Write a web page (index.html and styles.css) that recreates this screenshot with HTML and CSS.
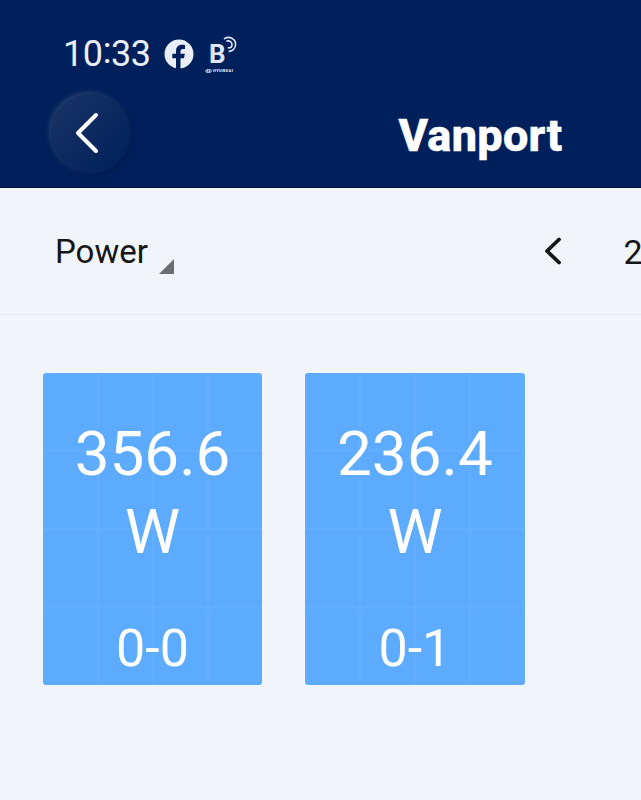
FILE: index.html
```
<!DOCTYPE html>
<html lang="en">
<head>
<meta charset="utf-8">
<title>Vanport</title>
<link rel="stylesheet" href="styles.css">
</head>
<body>
<div class="screen">
  <header class="header">
    <div class="status">
      <span class="clock">10<span class="colon">:</span>33</span>
      <svg class="facebook" viewBox="0 0 30 30">
        <circle cx="15" cy="15" r="14.5" fill="#e9eef8"/>
        <path d="M12 30V19.200H8.300v-4.400H12v-2.200c0-4.700 2-6.900 6.300-6.900 1 0 2.200.2 2.700.4v3.900h-1.800c-2.100 0-2.700.8-2.700 2.800v2h4.300l-.8 4.400h-3.500V30z" fill="#00205b"/>
      </svg>
      <div class="bluelink">
        <span class="bluelink-b">B</span>
        <svg class="waves" viewBox="0 0 14 17" fill="none" stroke="#dfe6f3" stroke-linecap="round">
          <path d="M1.500 2.600C6-.2 12.600 2.400 12.600 8.100c0 4.200-3 6.800-6.300 7.300" stroke-width="1.600"/>
          <path d="M4 5c2.600-.6 5 1 5 3.400 0 2.200-1.700 3.500-3.600 3.500" stroke-width="1.600"/>
        </svg>
        <div class="brand">
          <svg class="brand-mark" viewBox="0 0 7 4" fill="none" stroke="#dfe6f3" stroke-width=".8"><ellipse cx="3.500" cy="2" rx="3" ry="1.600"/><path d="M2.700.6 2 3.400M5 .6 4.300 3.400M2.300 2.200 4.700 1.800"/></svg>
          <span>HYUNDAI</span>
        </div>
      </div>
    </div>
    <div class="titlebar">
      <div class="back">
        <svg viewBox="0 0 24 42" fill="none" stroke="#fff" stroke-width="4" stroke-linecap="round" stroke-linejoin="round"><path d="M21 3 3 21 21 39"/></svg>
      </div>
      <h1 class="title">Vanport</h1>
    </div>
  </header>
  <div class="toolbar">
    <span class="metric">Power</span>
    <svg class="corner" viewBox="0 0 15 15"><path d="M15 0V15H0z" fill="#6a6d72"/></svg>
    <svg class="prev" viewBox="0 0 17 28" fill="none" stroke="#151617" stroke-width="3.800" stroke-linecap="round" stroke-linejoin="round"><path d="M15 2.500 3 14 15 25.500"/></svg>
    <span class="date">2</span>
  </div>
  <main class="panels">
    <div class="panel"><div class="value">356.6</div><div class="value">W</div><div class="label">0-0</div></div>
    <div class="panel"><div class="value">236.4</div><div class="value">W</div><div class="label">0-1</div></div>
  </main>
</div>
</body>
</html>
```
FILE: styles.css
```
* { box-sizing: border-box; }
body { margin: 0; font-family: Roboto, sans-serif; background: #f1f5fa; }
.screen { width: 641px; height: 800px; overflow: hidden; }
.header { height: 188px; background: #00205b; border-bottom: 1px solid #001446; color: #fff; padding-top: 32px; }
.status { display: flex; height: 44px; padding-left: 63px; }
.clock { width: 101px; font-size: 36px; line-height: 44px; letter-spacing: -.4px; color: #e9eef8; }
.colon { position: relative; top: -3px; }
.facebook { width: 30px; height: 30px; margin-top: 7px; }
.bluelink { position: relative; width: 34px; height: 44px; margin-left: 11px; color: #dfe6f3; }
.bluelink-b { display: block; padding-left: 4px; font-size: 26px; line-height: 30px; margin-top: 7px; font-weight: 700; }
.waves { position: absolute; left: 18px; top: 4px; width: 14px; height: 17px; }
.brand { display: flex; align-items: center; gap: 1px; height: 3px; font-size: 4px; line-height: 3px; font-weight: 900; letter-spacing: .5px; }
.brand-mark { width: 7px; height: 4px; }
.titlebar { display: flex; height: 111px; padding-left: 51px; }
.back { display: flex; align-items: center; justify-content: center; width: 79px; height: 79px; margin-top: 17.500px; border-radius: 50%; padding-right: 7px; background: linear-gradient(135deg, #1b3467, #0b285f 55%, #00205a); box-shadow: -2px -2px 5px #26406f, 3px 3px 6px #001b50; }
.back svg { width: 24px; height: 42px; }
.title { margin: 34px 0 0 268.500px; font-size: 45px; line-height: 52px; font-weight: 800; letter-spacing: .3px; -webkit-text-stroke: .5px #fff; }
.toolbar { display: flex; height: 127px; padding-left: 55px; border-bottom: 1px solid #e8ecf0; color: #151617; font-size: 33px; line-height: 39px; }
.toolbar > * { flex: none; }
.metric { width: 104px; margin-top: 44px; }
.corner { width: 15px; height: 15px; margin-top: 71px; }
.prev { width: 17px; height: 28px; margin: 49px 0 0 370px; }
.date { margin: 45px 0 0 62.500px; font-size: 34px; }
.panels { display: flex; gap: 43px; padding: 57.500px 0 0 42.800px; }
.panel { width: 219.400px; height: 312.500px; padding-top: 42px; border-radius: 3px; color: #fff; text-align: center; background: linear-gradient(90deg, transparent calc(100% - 2px), #64aeff 0) 1px 0 / 55px 100%, linear-gradient(transparent calc(100% - 2px), #64aeff 0) 0 0 / 100% 78.500px, #5cabff; }
.value { font-size: 62px; line-height: 78px; }
.label { margin-top: 47px; font-size: 52px; line-height: 62px; }
```
